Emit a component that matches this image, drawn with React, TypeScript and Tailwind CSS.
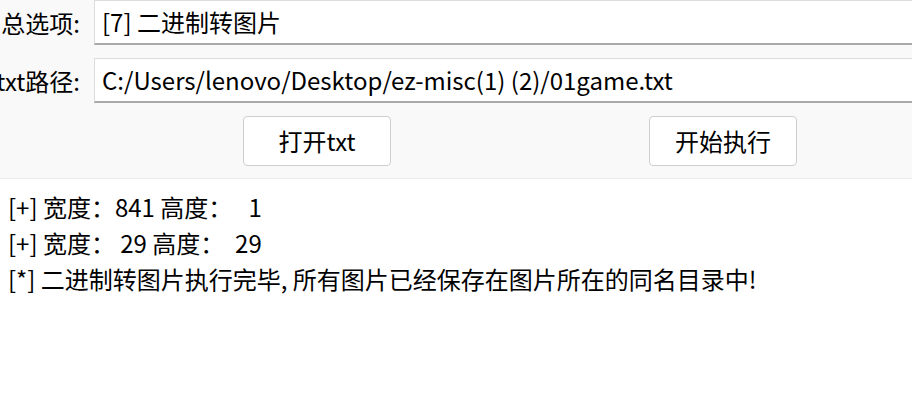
const font = { fontFamily: '"Noto Sans CJK SC", "Noto Sans", sans-serif' };

function Field({ label, value }: { label: string; value: string }) {
  return (
    <div className="flex h-[45px] items-stretch">
      <div className="flex w-[94px] shrink-0 items-center justify-end overflow-visible whitespace-nowrap pr-[14px] text-[24px] text-black">
        {label}
      </div>
      <div className="flex flex-1 items-center whitespace-nowrap border-t border-l border-t-[#dcdcdc] border-l-[#dcdcdc] border-b-2 border-b-[#a9a9a9] bg-white pl-[7px] text-[24px] text-black">
        {value}
      </div>
    </div>
  );
}

function Btn({ children }: { children: React.ReactNode }) {
  return (
    <button className="flex h-[50px] w-[148px] items-center justify-center rounded-[4px] border border-[#cfcfcf] bg-white text-[24px] text-black">
      {children}
    </button>
  );
}

export default function App() {
  const logs = [
    "[+] 宽度：841 高度：   1",
    "[+] 宽度： 29 高度：  29",
    "[*] 二进制转图片执行完毕, 所有图片已经保存在图片所在的同名目录中!",
  ];
  return (
    <div className="h-[419px] w-[912px] overflow-hidden bg-white" style={font}>
      <div className="flex h-[179px] flex-col gap-[13px] border-b border-[#ececec] bg-[#f9f9f9]">
        <Field label="总选项:" value="[7] 二进制转图片" />
        <Field label="txt路径:" value="C:/Users/lenovo/Desktop/ez-misc(1) (2)/01game.txt" />
        <div className="flex pl-[243px]">
          <Btn>打开txt</Btn>
          <div className="w-[258px]" />
          <Btn>开始执行</Btn>
        </div>
      </div>
      <div className="flex flex-col pl-[8px] pt-[10px] text-[24px] leading-[36px] text-black">
        {logs.map((l) => (
          <div key={l} className="whitespace-pre">
            {l}
          </div>
        ))}
      </div>
    </div>
  );
}
